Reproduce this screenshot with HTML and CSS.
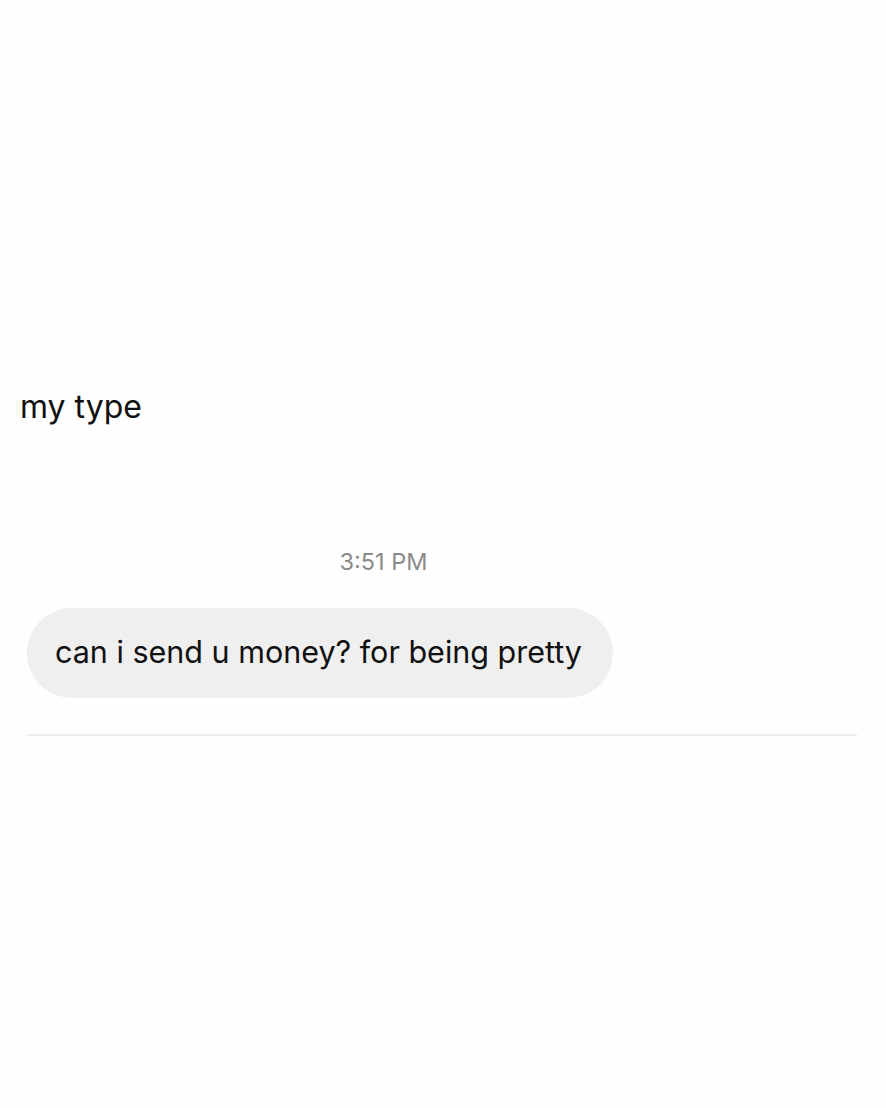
FILE: index.html
```html
<!DOCTYPE html>
<html lang="en">
  <head>
    <meta charset="UTF-8" />
    <title>Messages</title>
    <link rel="stylesheet" href="styles.css">
  </head>
  <body>
    <div class="thread">
      <!-- 上一条消息 -->
      <p class="plain-msg">my type</p>

      <!-- 时间 -->
      <div class="stamp">3:51 PM</div>

      <!-- 气泡 -->
      <div class="row">
        <div class="bubble">can i send u money? for being pretty</div>
      </div>

      <div class="divider"></div>
    </div>
  </body>
</html>
```

FILE: styles.css
```css
* {
  margin: 0;
  padding: 0;
  box-sizing: border-box;
}

body {
  background: #fefefe;
  color: #111;
  font-family: Inter, "Noto Sans", sans-serif;
  width: 886px;
  height: 1108px;
  overflow: hidden;
}

.thread {
  display: flex;
  flex-direction: column;
  padding: 385px 0 0;
}

.plain-msg {
  padding-left: 20px;
  font-size: 32px;
  line-height: 44px;
}

.stamp {
  margin-top: 118px;
  padding-right: 119px;
  text-align: center;
  font-size: 23.5px;
  line-height: 30px;
  color: #8a8a8a;
}

.row {
  display: flex;
  margin-top: 31px;
  padding-left: 27px;
}

.bubble {
  height: 90px;
  padding: 0 31px 3px 28px;
  display: flex;
  align-items: center;
  background: #efefef;
  border-radius: 45px;
  font-size: 30.5px;
}

.divider {
  margin: 36px 29px 0 27px;
  height: 2px;
  background: #ececec;
}
```
